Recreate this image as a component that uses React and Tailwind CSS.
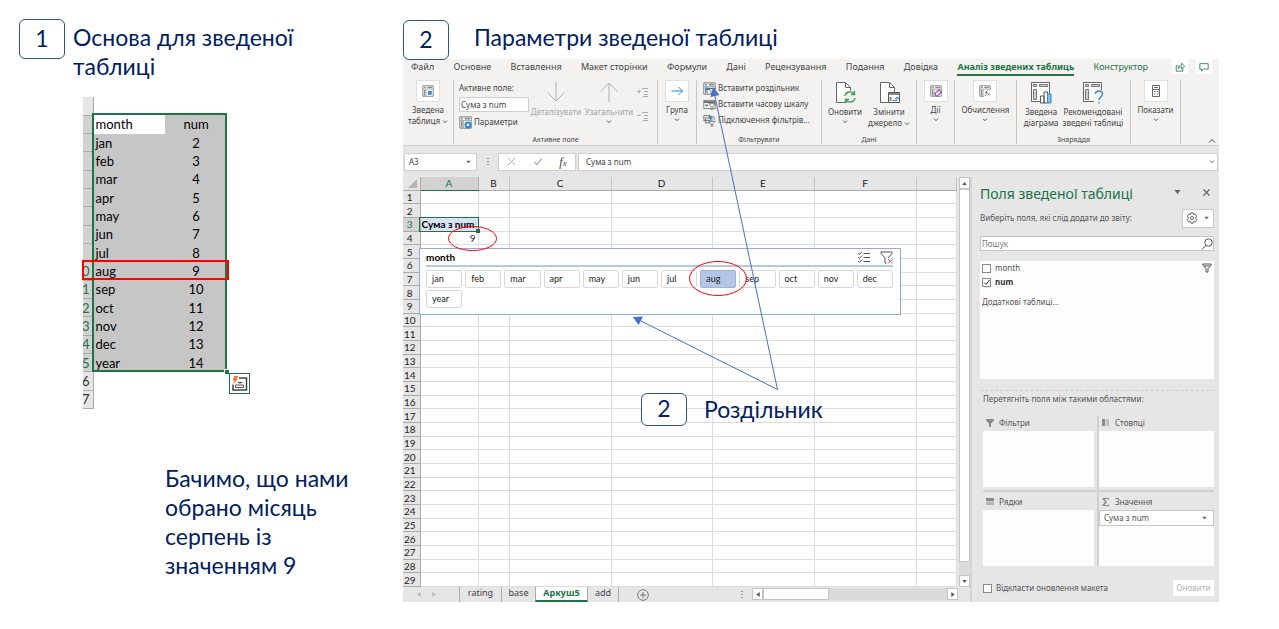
import React from "react";

const SLIDE = "font-['Lato',sans-serif] text-[#002060]";

const months = [
  ["jan", 2], ["feb", 3], ["mar", 4], ["apr", 5], ["may", 6], ["jun", 7], ["jul", 8],
  ["aug", 9], ["sep", 10], ["oct", 11], ["nov", 12], ["dec", 13], ["year", 14],
];

function Badge({ children, className = "h-10" }) {
  return (
    <span className={`flex w-[46px] shrink-0 items-center justify-center rounded-md border border-[#2f528f] bg-white pb-[2px] text-[23px] leading-none ${className}`}>
      {children}
    </span>
  );
}

function Chevron({ className = "" }) {
  return (
    <svg viewBox="0 0 8 6" className={`inline-block h-1 w-[6px] fill-none stroke-[#555] ${className}`} strokeWidth="1.5" aria-hidden="true">
      <path d="M1 1l3 3 3-3" />
    </svg>
  );
}

function Caret({ className = "" }) {
  return (
    <svg viewBox="0 0 8 5" className={`h-1 w-[7px] shrink-0 fill-[#666] ${className}`} aria-hidden="true">
      <path d="M0 0h8L4 5z" />
    </svg>
  );
}

/* ---------- source table ---------- */

function SourceTable() {
  return (
    <div className="relative ml-[83px] mt-4 w-[144px] font-['Lato',sans-serif] text-[13px] leading-[16px] text-black">
      <table className="h-[312px] w-full table-fixed border-collapse">
        <colgroup>
          <col className="w-[10px]" />
          <col className="w-[72px]" />
          <col />
        </colgroup>
        <tbody>
          <tr className="h-[17px]">
            <td className="border-b border-r border-[#ababab] bg-[#e6e6e6] p-0" />
            <td />
            <td />
          </tr>
          <tr className="h-[17px]">
            <RowTick active />
            <th scope="col" className="bg-white p-0 pl-[2px] text-left font-normal">month</th>
            <th scope="col" className="bg-[#c6c6c6] p-0 text-center font-normal">num</th>
          </tr>
          {months.map(([m, n], i) => (
            <tr key={m} className="h-[17px]">
              <RowTick n={i > 6 ? String((i + 3) % 10) : ""} active />
              <td className="bg-[#c6c6c6] p-0 pl-[2px]">{m}</td>
              <td className="bg-[#c6c6c6] p-0 text-center">{n}</td>
            </tr>
          ))}
          {["6", "7"].map((n) => (
            <tr key={n} className="h-[17px]">
              <RowTick n={n} />
              <td />
              <td />
            </tr>
          ))}
        </tbody>
      </table>
      <div className="pointer-events-none absolute left-[9px] right-0 top-[16px] h-[259px] border-2 border-[#217346]" />
      <div className="absolute right-[-2px] top-[272px] size-[5px] border-l border-t border-white bg-[#217346]" />
      <div className="pointer-events-none absolute left-[-1px] right-[-2px] top-[163px] h-5 border-2 border-[#f00]" />
      <button aria-label="Швидкий аналіз" className="absolute left-[146px] top-[276px] flex size-[21px] items-center justify-center border border-[#217346] bg-white">
        <svg viewBox="0 0 17 17" className="size-[17px] fill-none" aria-hidden="true">
          <path d="M8 3h7.500v12H2V9.500" stroke="#444" strokeWidth="1.500" />
          <path d="M4.500 12.500V10h8v2.500zM9 6.500V9M7 7.500h4.500" stroke="#555" />
          <path d="M3.500 1h4L5.500 4H7L2 9.500 3.500 5.500H1.500z" fill="#ed7d31" />
        </svg>
      </button>
    </div>
  );
}

function RowTick({ n, active }) {
  return (
    <th
      scope="row"
      className={`border-b border-r border-[#ababab] p-0 font-normal ${active ? "bg-[#d2d2d2] text-[#217346]" : "bg-[#e6e6e6] text-[#333]"}`}
    >
      {n && <span className="flex h-4 justify-end overflow-hidden pr-[3px]">{n}</span>}
    </th>
  );
}

/* ---------- ribbon ---------- */

function Group({ width, caption, children }) {
  return (
    <div className={`flex shrink-0 flex-col border-r border-[#c8c6c4] ${width}`}>
      <div className="flex flex-1 justify-center">{children}</div>
      <div className="h-[11px] text-center text-[7px] leading-[13px] text-[#444]">{caption}</div>
    </div>
  );
}

function BigButton({ icon, lines, boxed, chevron = "below", muted }) {
  return (
    <button className={`flex flex-col items-center whitespace-nowrap text-[8px] leading-[11px] ${muted ? "text-[#a6a6a6]" : "text-[#444]"}`}>
      <span className={boxed ? "mb-[2px] flex h-[22px] w-6 items-center justify-center border border-[#e1dfdd] bg-white" : "mb-[2px] flex h-6 items-center justify-center"}>
        {icon}
      </span>
      {lines.map((l, i) => (
        <span key={l}>
          {l}
          {chevron === "inline" && i === lines.length - 1 && <Chevron className="ml-[2px]" />}
        </span>
      ))}
      {chevron === "below" && <Chevron className="mt-[3px]" />}
    </button>
  );
}

function PivotIcon({ children, className = "size-[14px]" }) {
  return (
    <svg viewBox="0 0 16 16" className={`shrink-0 fill-none ${className}`} aria-hidden="true">
      <path d="M1 1h14v14H1z" fill="#fff" stroke="#666" />
      <path d="M2.500 3.300H5M7 3.300h6.500" stroke="#8a8a8a" strokeWidth="2" />
      <path d="M3.500 6.500v7.500" stroke="#8a8a8a" strokeWidth="2" />
      <path d="M1 5.500h14M5.500 5.500V15" stroke="#888" strokeWidth=".8" />
      {children}
    </svg>
  );
}

function LargePivot({ children }) {
  return (
    <svg viewBox="0 0 24 24" className="size-6 fill-none" aria-hidden="true">
      <path d="M2.500 2.500h18v19h-18z" fill="#fafafa" stroke="#666" />
      <path d="M4.500 4.500h3v2h-3zM10.500 4.500h8v2h-8zM4.500 9.500h3v10h-3z" fill="#d0d0d0" stroke="#777" />
      {children}
    </svg>
  );
}

function DocIcon({ children }) {
  return (
    <svg viewBox="0 0 24 24" className="size-6 fill-none" aria-hidden="true">
      <path d="M3.500 2.500h9l5 5v15h-14z" fill="#fff" stroke="#666" />
      <path d="M12.500 2.500v5h5" stroke="#666" />
      {children}
    </svg>
  );
}

function SmallButton({ icon, label }) {
  return (
    <button className="flex h-4 items-center gap-[2px] whitespace-nowrap text-[8px] leading-none text-[#444]">
      {icon}
      {label}
    </button>
  );
}

function BigArrow({ up }) {
  return (
    <svg viewBox="0 0 20 22" className={`h-[22px] w-5 fill-none stroke-[#b0b0b0] ${up ? "rotate-180" : ""}`} aria-hidden="true">
      <path d="M10 1v19M1.500 11.500L10 20l8.500-8.500" />
    </svg>
  );
}

function ExpandIcon({ minus }) {
  return (
    <svg viewBox="0 0 12 12" className="size-3 fill-none stroke-[#aaa]" aria-hidden="true">
      <path d={minus ? "M0 5.500h4" : "M0 5.500h4M2 3.500v4"} />
      <path d="M5 2.500h6M7 5.500h4M7 8.500h4M6 10.500h5" />
    </svg>
  );
}

function Ribbon() {
  const tabs = ["Файл", "Основне", "Вставлення", "Макет сторінки", "Формули", "Дані", "Рецензування", "Подання", "Довідка", "Аналіз зведених таблиць", "Конструктор"];
  return (
    <div className="border-b border-[#d0cecc] bg-[#f3f2f1]">
      <div className="flex h-[18px] pl-2 pr-[7px]">
        <nav className="flex flex-1 justify-between text-[9px] leading-[15px] text-[#444]">
          {tabs.map((t, i) => (
            <a
              key={t}
              href="#"
              className={`whitespace-nowrap ${i === 9 ? "h-[17px] border-b-2 border-[#217346] font-bold text-[#217346]" : i === 10 ? "text-[#217346]" : ""}`}
            >
              {t}
            </a>
          ))}
        </nav>
        <button aria-label="Поділитися" className="ml-6 flex h-[15px] w-4 items-center justify-center bg-white">
          <svg viewBox="0 0 12 12" className="size-[10px] fill-none stroke-[#217346]" aria-hidden="true">
            <path d="M4 4.500H1.500V11h8V8M4 8c0-3 2-4 4-4V1.500L11.500 5 8 8.500V6C6 6 5 6.500 4 8z" />
          </svg>
        </button>
        <button aria-label="Примітки" className="ml-2 flex h-[15px] w-4 items-center justify-center bg-white">
          <svg viewBox="0 0 12 12" className="size-[10px] fill-none stroke-[#217346]" aria-hidden="true">
            <path d="M1 2h10v6.500H5.500L3 11V8.500H1z" />
          </svg>
        </button>
      </div>

      <div className="flex h-[68px] pb-[1px] pt-[3px]">
        <Group width="w-[51px]">
          <BigButton boxed chevron="inline" lines={["Зведена", "таблиця"]} icon={<PivotIcon className="size-3"><path d="M8 8h5v5H8z" fill="#2b88d8" /></PivotIcon>} />
        </Group>
        <Group width="w-[204px]" caption="Активне поле">
          <div className="flex flex-1 pl-[5px]">
            <div className="flex w-[70px] flex-col text-[8px] text-[#444]">
              <label htmlFor="active-field" className="mb-1 mt-[2px] leading-[11px]">Активне поле:</label>
              <input id="active-field" defaultValue="Сума з num" className="mb-[2px] h-[15px] w-[70px] border border-[#d2d0ce] bg-white px-[1px] text-[8px] leading-none" />
              <SmallButton label="Параметри" icon={<PivotIcon className="size-[13px]"><circle cx="11" cy="11" r="3" stroke="#2b88d8" strokeWidth="2.500" fill="#fff" /></PivotIcon>} />
            </div>
            <div className="flex w-[54px] justify-center"><BigButton muted chevron="none" lines={["Деталізувати"]} icon={<BigArrow />} /></div>
            <div className="flex w-[52px] justify-center"><BigButton muted lines={["Узагальнити"]} icon={<BigArrow up />} /></div>
            <div className="flex flex-col gap-3 pl-[2px] pt-[6px]">
              <button aria-label="Розгорнути поле"><ExpandIcon /></button>
              <button aria-label="Згорнути поле"><ExpandIcon minus /></button>
            </div>
          </div>
        </Group>
        <Group width="w-[39px]">
          <BigButton
            boxed
            lines={["Група"]}
            icon={<svg viewBox="0 0 14 14" className="size-[14px] fill-none stroke-[#2b88d8]" aria-hidden="true"><path d="M1.500 7h11M8.500 3l4 4-4 4" /></svg>}
          />
        </Group>
        <Group width="w-[125px]" caption="Фільтрувати">
          <div className="flex flex-1 flex-col pl-[6px]">
            <SmallButton label="Вставити роздільник" icon={<PivotIcon className="size-[13px]"><path d="M3 7h10v3H3z" fill="#2b88d8" /><path d="M7 8h8l-3 3.500V15h-2v-3.500z" fill="#fff" stroke="#555" /></PivotIcon>} />
            <SmallButton
              label="Вставити часову шкалу"
              icon={<svg viewBox="0 0 16 16" className="size-[13px] fill-none stroke-[#666]" aria-hidden="true"><path d="M1 3h14v10H1z" fill="#fff" /><path d="M1 5h14M3 9h3" strokeWidth="2" /><path d="M7 7h8l-3 3.500V14h-2v-3.500z" fill="#fff" /></svg>}
            />
            <SmallButton
              label="Підключення фільтрів..."
              icon={<svg viewBox="0 0 16 16" className="size-[13px] fill-none stroke-[#666]" aria-hidden="true"><path d="M1 2h8v6H1zM3 5h8v6H3z" fill="#e5e5e5" /><path d="M7 9h8l-3 3v3h-2v-3z" fill="#fff" /><path d="M8 4c3-2 6-1 6 3M8 1v3.500h3" stroke="#2b88d8" strokeWidth="1.300" /></svg>}
            />
          </div>
        </Group>
        <Group width="w-[95px]" caption="Дані">
          <div className="flex flex-1 justify-around px-[3px]">
            <BigButton lines={["Оновити"]} icon={<DocIcon><circle cx="17" cy="17" r="6.500" fill="#f3f2f1" /><path d="M12 16a5 5 0 0 1 9-2M22 18a5 5 0 0 1-9 2M21.500 11v3.500H18M12.500 23v-3.500H16" stroke="#3a9b5c" strokeWidth="1.300" /></DocIcon>} />
            <BigButton chevron="inline" lines={["Змінити", "джерело"]} icon={<DocIcon><path d="M11.500 12.500h11v10h-11z" fill="#fff" stroke="#555" /><path d="M12 14h10" stroke="#888" strokeWidth="2" /><path d="M13.500 17v4" stroke="#888" strokeWidth="2" /><path d="M16 20.500h4v-3M18 19l2-2 2 2" stroke="#2b88d8" /></DocIcon>} />
          </div>
        </Group>
        <Group width="w-[38px]">
          <BigButton boxed lines={["Дії"]} icon={<PivotIcon className="size-3"><path d="M6.500 11.500l5-5 3.500 3-5 5H8z" fill="#fff" stroke="#a33fb5" strokeWidth="1.500" /></PivotIcon>} />
        </Group>
        <Group width="w-[62px]">
          <BigButton boxed lines={["Обчислення"]} icon={<PivotIcon className="size-3"><path d="M7 6.500h9V16H7z" fill="#fff" /><path d="M12 7.500c-2-.5-2 1-2.200 3s-.3 4-2 3.500M8 10h3.500M11.500 11l3 3M14.500 11l-3 3" stroke="#555" strokeWidth=".9" /></PivotIcon>} />
        </Group>
        <Group width="w-[114px]" caption="Знаряддя">
          <div className="flex flex-1 justify-center gap-1">
            <BigButton chevron="none" lines={["Зведена", "діаграма"]} icon={<LargePivot><path d="M11.500 16h3.500v7h-3.500zM15 12h3.500v11H15z" fill="#fff" stroke="#555" /><path d="M18.500 14H22v9h-3.500z" fill="#83beec" stroke="#2b88d8" /></LargePivot>} />
            <BigButton chevron="none" lines={["Рекомендовані", "зведені таблиці"]} icon={<LargePivot><path d="M13 10h10v13H13z" fill="#f3f2f1" /><path d="M14.500 14c0-4 7-4 7 0 0 3-3.500 3-3.500 6M18 22v1.500" stroke="#2b88d8" strokeWidth="1.300" /></LargePivot>} />
          </div>
        </Group>
        <Group width="w-[50px]">
          <BigButton
            boxed
            lines={["Показати"]}
            icon={<svg viewBox="0 0 14 14" className="size-[14px] fill-none stroke-[#666]" aria-hidden="true"><path d="M3.500 1.500h7v11h-7zM3.500 5.500h7M5 3.500h4" /><path d="M5 7.500h1.500M8 7.500h1.500M5 10h1.500M8 10h1.500" /></svg>}
          />
        </Group>
        <button aria-label="Згорнути стрічку" className="ml-auto mr-[3px] self-end">
          <svg viewBox="0 0 10 8" className="h-[6px] w-2 fill-none stroke-[#444]" strokeWidth="1.300" aria-hidden="true"><path d="M1 6l4-4 4 4" /></svg>
        </button>
      </div>
    </div>
  );
}

function FormulaBar() {
  return (
    <div className="flex h-[31px] items-center gap-[2px] bg-[#e6e6e6] pl-[1px] pr-[1px] text-[8px] text-[#444]">
      <div className="flex h-[18px] w-[73px] items-center justify-between border border-[#d0d0d0] bg-white px-1">
        <input aria-label="Ім’я" defaultValue="A3" className="w-10 leading-none" />
        <Caret className="scale-75" />
      </div>
      <span className="flex w-[17px] justify-center">
        <svg viewBox="0 0 2 10" className="h-[10px] w-[2px] fill-[#999]" aria-hidden="true"><path d="M0 1h2v1H0zM0 4h2v1H0zM0 7h2v1H0z" /></svg>
      </span>
      <div className="flex h-[18px] w-[78px] items-center justify-around border border-[#d0d0d0] bg-white">
        <button aria-label="Скасувати"><svg viewBox="0 0 10 10" className="size-[9px] fill-none stroke-[#aaa]" aria-hidden="true"><path d="M1 1l8 8M9 1L1 9" /></svg></button>
        <button aria-label="Ввести"><svg viewBox="0 0 11 10" className="h-[9px] w-[10px] fill-none stroke-[#aaa]" strokeWidth="1.300" aria-hidden="true"><path d="M1 5.500L4 8.500 10 1.500" /></svg></button>
        <button className="font-['Liberation_Serif',serif] text-[12px] italic leading-none">f<span className="text-[9px]">x</span></button>
      </div>
      <div className="flex h-[18px] flex-1 items-center border border-[#d0d0d0] bg-white pl-[7px] pr-[2px]">
        <input aria-label="Рядок формул" defaultValue="Сума з num" className="flex-1 leading-none" />
        <Chevron />
      </div>
    </div>
  );
}

/* ---------- worksheet ---------- */

const columns = ["A", "B", "C", "D", "E", "F", ""];

function Sheet() {
  return (
    <table className="h-[410px] min-w-0 flex-1 table-fixed border-collapse bg-white font-['Lato',sans-serif] text-[10px] leading-[10px] text-[#222]">
      <colgroup>
        <col className="w-[17px]" />
        <col className="w-[58px]" />
        <col className="w-[31px]" />
        <col className="w-[102px]" />
        <col className="w-[101px]" />
        <col className="w-[102px]" />
        <col className="w-[102px]" />
        <col />
      </colgroup>
      <thead>
        <tr className="h-[13px] bg-[#e6e6e6]">
          <td className="border-b border-r border-[#ababab] p-0">
            <svg viewBox="0 0 10 10" className="ml-[5px] size-[9px] fill-[#b4b4b4]" aria-hidden="true"><path d="M10 0v10H0z" /></svg>
          </td>
          {columns.map((c) => (
            <th
              key={c}
              scope="col"
              className={`border-r p-0 font-normal ${c === "A" ? "border-b border-r-[#ababab] border-b-[#217346] bg-[#d2d2d2] text-[#217346]" : "border-b border-b-[#ababab] border-r-[#c4c4c4]"}`}
            >
              {c}
            </th>
          ))}
        </tr>
      </thead>
      <tbody>
        {Array.from({ length: 29 }, (_, i) => i + 1).map((n) => (
          <tr key={n} className="h-[13px]">
            <th
              scope="row"
              className={`border-b border-r border-[#ababab] p-0 pr-[3px] text-center font-normal ${n === 3 ? "bg-[#d2d2d2] text-[#217346]" : "bg-[#e6e6e6]"}`}
            >
              {n}
            </th>
            {columns.map((c) => (
              <td
                key={c}
                className={`whitespace-nowrap border-b border-r border-[#dcdcdc] p-0 ${n === 3 && c === "A" ? "bg-[#d9e1f2] pl-[1px] font-bold text-black" : ""} ${n === 4 && c === "A" ? "pr-[2px] text-right" : ""}`}
              >
                {c === "A" && n === 3 ? "Сума з num" : c === "A" && n === 4 ? "9" : null}
              </td>
            ))}
          </tr>
        ))}
      </tbody>
    </table>
  );
}

function Slicer() {
  return (
    <div className="absolute left-4 top-[71px] h-[67px] w-[482px] border border-[#8faadc] bg-white pl-[6px] pr-[7px] font-['Lato',sans-serif] text-[9px]">
      <div className="flex h-[18px] items-center justify-between border-b-2 border-[#b4c7e7]">
        <span className="text-[10px] font-bold leading-none text-black">month</span>
        <span className="flex gap-[10px]">
          <button aria-label="Вибір кількох елементів">
            <svg viewBox="0 0 13 13" className="size-[13px] fill-none stroke-[#555]" aria-hidden="true"><path d="M6.500 2.500H13M6.500 6.500H13M6.500 10.500H13M1 2l1.500 1.500L5 .5M1 6l1.500 1.500L5 4.500M1 10l1.500 1.500L5 8.500" /></svg>
          </button>
          <button aria-label="Очистити фільтр">
            <svg viewBox="0 0 13 13" className="size-[13px] fill-none stroke-[#555]" aria-hidden="true"><path d="M1 1h11v1.500L8 7M1 1v1.500L5 7v5h1.500" /><path d="M8 8l4.500 4.500M12.500 8L8 12.500" stroke="#e8605a" /></svg>
          </button>
        </span>
      </div>
      <div className="mt-[3px] grid grid-cols-12 gap-x-[3px] gap-y-[2px]">
        {months.map(([m]) => (
          <button
            key={m}
            className={`h-[18px] rounded-xs border pb-[1px] pl-[5px] text-left leading-none text-[#222] ${m === "aug" ? "border-[#9fb2d8] bg-[#b4c6e7]" : "border-[#d9d9d9] bg-white"}`}
          >
            {m}
          </button>
        ))}
      </div>
    </div>
  );
}

function SheetTabs() {
  return (
    <div className="flex h-[15px] items-stretch bg-[#e6e6e6] text-[9px] leading-[11px] text-[#444]">
      <span className="flex w-[57px] items-center gap-[11px] border-r border-[#ababab] pl-[14px]">
        <svg viewBox="0 0 4 6" className="h-[5px] w-[4px] fill-[#b8b8b8]" aria-hidden="true"><path d="M4 0v6L0 3z" /></svg>
        <svg viewBox="0 0 4 6" className="h-[5px] w-[4px] fill-[#b8b8b8]" aria-hidden="true"><path d="M0 0v6l4-3z" /></svg>
      </span>
      <button className="w-[42px] border-r border-[#ababab] pb-1">rating</button>
      <button className="w-[33px] pb-1">base</button>
      <button className="w-[53px] border-x border-b-2 border-x-[#ababab] border-b-[#217346] bg-white pb-[2px] font-bold text-[#217346]">Аркуш5</button>
      <button className="w-[31px] border-r border-[#ababab] pb-1">add</button>
      <button aria-label="Новий аркуш" className="ml-[18px]">
        <svg viewBox="0 0 12 12" className="size-3 fill-none stroke-[#777]" aria-hidden="true"><circle cx="6" cy="6" r="5.300" /><path d="M6 3v6M3 6h6" /></svg>
      </button>
      <svg viewBox="0 0 2 10" className="ml-auto mr-[9px] mt-[3px] h-[10px] w-[2px] fill-[#999]" aria-hidden="true"><path d="M0 1h2v1H0zM0 4h2v1H0zM0 7h2v1H0z" /></svg>
      <div className="mr-3 mt-[1px] flex h-3 w-[206px] justify-between bg-[#dadada]">
        <button aria-label="Прокрутити ліворуч" className="flex w-[11px] items-center justify-center border border-[#c4c4c4] bg-white"><svg viewBox="0 0 4 6" className="h-[5px] w-[4px] fill-[#555]" aria-hidden="true"><path d="M4 0v6L0 3z" /></svg></button>
        <span className="mr-auto w-[66px] border border-[#c4c4c4] bg-white" />
        <button aria-label="Прокрутити праворуч" className="flex w-[11px] items-center justify-center border border-[#c4c4c4] bg-white"><svg viewBox="0 0 4 6" className="h-[5px] w-[4px] fill-[#555]" aria-hidden="true"><path d="M0 0v6l4-3z" /></svg></button>
      </div>
    </div>
  );
}

function VerticalScroll() {
  return (
    <div className="ml-[2px] flex w-[11px] shrink-0 flex-col bg-[#dadada]">
      <button aria-label="Прокрутити вгору" className="flex h-3 items-center justify-center border border-[#c4c4c4] bg-white"><svg viewBox="0 0 6 4" className="h-[3px] w-[5px] fill-[#555]" aria-hidden="true"><path d="M0 4h6L3 0z" /></svg></button>
      <span className="h-[373px] border border-[#c4c4c4] bg-white" />
      <button aria-label="Прокрутити вниз" className="mt-auto flex h-3 items-center justify-center border border-[#c4c4c4] bg-white"><svg viewBox="0 0 6 4" className="h-[3px] w-[5px] fill-[#555]" aria-hidden="true"><path d="M0 0h6L3 4z" /></svg></button>
    </div>
  );
}

/* ---------- field pane ---------- */

function Check({ label, bold, checked }) {
  return (
    <label className={`flex items-center gap-1 leading-[14px] ${bold ? "font-bold text-[#333]" : ""}`}>
      <span className="grid">
        <input type="checkbox" defaultChecked={checked} className="peer col-start-1 row-start-1 size-[9px] appearance-none border border-[#8a8a8a] bg-white" />
        <svg viewBox="0 0 9 9" className="invisible col-start-1 row-start-1 size-[9px] fill-none stroke-[#333] peer-checked:visible" aria-hidden="true"><path d="M2 4.500l2 2 3.500-4.500" /></svg>
      </span>
      {label}
    </label>
  );
}

function Area({ icon, label, className, children }) {
  return (
    <div className={`flex flex-col ${className}`}>
      <div className="flex h-[15px] items-center gap-[5px] pb-[1px] pl-[3px]">
        <svg viewBox="0 0 8 8" className="size-2 fill-[#8a8a8a]" aria-hidden="true">{icon}</svg>
        {label}
      </div>
      <div className="h-14 bg-[#fdfdfd]">{children}</div>
    </div>
  );
}

function FieldPane() {
  return (
    <aside className="flex w-[249px] shrink-0 flex-col border-l-2 border-[#d4d4d4] bg-[#e6e6e6] pl-2 pr-[5px] text-[8px] text-[#555]">
      <div className="mt-[7px] flex h-5 items-center text-[#666]">
        <h2 className="flex-1 whitespace-nowrap text-[14px] leading-5 text-[#217346]">Поля зведеної таблиці</h2>
        <button aria-label="Параметри області" className="mb-1 mr-[22px]"><Caret /></button>
        <button aria-label="Закрити" className="mb-1 mr-1"><svg viewBox="0 0 8 8" className="size-[7px] fill-none stroke-[#555]" strokeWidth="1.300" aria-hidden="true"><path d="M.5.5l7 7M7.500.5l-7 7" /></svg></button>
      </div>
      <div className="mt-1 flex h-5 items-center justify-between">
        <span>Виберіть поля, які слід додати до звіту:</span>
        <button aria-label="Знаряддя" className="flex h-[19px] w-8 items-center justify-center gap-[5px] border border-[#c8c8c8] bg-white">
          <svg viewBox="0 0 12 12" className="size-3 fill-none stroke-[#666]" aria-hidden="true"><path d="M4.500 2.500L5 .7h2l.5 1.800 1.800-.4 1.500 2L9.500 6l1.300 1.900-1.500 2-1.800-.4-.5 1.800H5l-.5-1.800-1.800.4-1.500-2L2.500 6 1.200 4.100l1.500-2z" /><circle cx="6" cy="6" r="1.500" /></svg>
          <Caret className="scale-75" />
        </button>
      </div>
      <div className="mt-2 flex h-[15px] items-center border border-[#c4c4c4] bg-white">
        <input aria-label="Пошук" placeholder="Пошук" className="min-w-0 flex-1 pl-[1px] leading-none placeholder:text-[#777]" />
        <svg viewBox="0 0 12 12" className="size-3 fill-none stroke-[#555]" aria-hidden="true"><circle cx="7.500" cy="4.500" r="3.700" /><path d="M5 7.500L.8 11.500" /></svg>
      </div>
      <div className="mt-[10px] h-[118px] bg-[#fdfdfd] pl-[2px]">
        <div className="flex items-center justify-between pr-[2px]">
          <Check label="month" />
          <svg viewBox="0 0 10 10" className="size-[10px] fill-none stroke-[#555]" aria-hidden="true"><path d="M.8 1h8.400v1L6 5.500V9H4V5.500L.8 2zM2 3h6" /></svg>
        </div>
        <Check label="num" bold checked />
        <a href="#" className="mt-[7px] block leading-[12px]">Додаткові таблиці...</a>
      </div>
      <div className="mt-[11px] border-t border-dashed border-[#cfcfcf] pl-[3px] pt-[2px] leading-[12px]">Перетягніть поля між такими областями:</div>
      <div className="ml-[3px] mt-[11px] flex border-b-2 border-[#d0d0d0] pb-[3px]">
        <Area className="mr-[3px] w-[48%]" label="Фільтри" icon={<path d="M0 0h8v1.500L5 4.500V8H3V4.500L0 1.500z" />} />
        <div className="mb-[-3px] w-[2px] bg-[#d0d0d0]" />
        <Area className="flex-1" label="Стовпці" icon={<><path d="M0 0h3v7H0z" /><path d="M3.500 0H7v7H3.500z" fill="#c0c0c0" /></>} />
      </div>
      <div className="ml-[3px] mt-[3px] flex">
        <Area className="mr-[3px] w-[48%]" label="Рядки" icon={<><path d="M0 0h8v3H0z" /><path d="M0 3.500h8V7H0z" fill="#b4b4b4" /></>} />
        <div className="mt-[-3px] w-[2px] bg-[#d0d0d0]" />
        <Area className="flex-1" label="Значення" icon={<path d="M.5 0h6.500v2L6 1H2.500l2.500 3-2.500 3H6l1-1v2H.5V7L3 4 .5 1z" />}>
          <div className="flex items-center border border-[#c8c8c8] bg-white">
            <select aria-label="Значення" className="h-[14px] min-w-0 flex-1 appearance-none pl-1 leading-[14px]">
              <option>Сума з num</option>
            </select>
            <Caret className="mr-[5px] scale-75" />
          </div>
        </Area>
      </div>
      <div className="ml-[3px] mt-[14px] flex items-center justify-between">
        <Check label="Відкласти оновлення макета" />
        <button disabled className="h-4 w-[41px] bg-white leading-none text-[#b0b0b0]">Оновити</button>
      </div>
    </aside>
  );
}

/* ---------- annotations ---------- */

function Annotations() {
  return (
    <svg className="pointer-events-none absolute left-0 top-0 h-full w-full fill-none" aria-hidden="true">
      <g stroke="#4472c4">
        <path d="M374.500 389.500L311 92M374.500 389.500L236 320" />
        <path d="M310 87l-2.500 10 9-2zM230 317l10-.5-4.500 8.500z" fill="#4472c4" stroke="none" />
      </g>
      <g stroke="#f00">
        <ellipse cx="69.500" cy="238.500" rx="24" ry="12" />
        <ellipse cx="315" cy="278.500" rx="28.500" ry="17" />
      </g>
    </svg>
  );
}

export default function App() {
  return (
    <main className="flex min-h-screen bg-white">
      <section className="w-[403px] shrink-0">
        <div className={`flex gap-2 pl-[19px] pt-[19px] ${SLIDE}`}>
          <Badge>1</Badge>
          <h1 className="w-[250px] pt-1 text-[23px] leading-[29px]">Основа для зведеної таблиці</h1>
        </div>
        <SourceTable />
        <p className={`ml-[165px] mt-[55px] w-[200px] text-[23px] leading-[29px] ${SLIDE}`}>
          Бачимо, що нами обрано місяць серпень із значенням 9
        </p>
      </section>

      <section className="relative mr-[60px] h-fit min-w-0 flex-1">
        <div className={`flex h-[59px] items-start gap-[25px] pt-5 ${SLIDE}`}>
          <Badge>2</Badge>
          <h1 className="pt-[3px] text-[23px] leading-[29px]">Параметри зведеної таблиці</h1>
        </div>
        <div className="bg-[#e6e6e6] font-['Noto_Sans',sans-serif]">
          <Ribbon />
          <FormulaBar />
          <div className="flex">
            <div className="relative min-w-0 flex-1">
              <div className="flex">
                <Sheet />
                <VerticalScroll />
              </div>
              <SheetTabs />
              <Slicer />
              <div className="pointer-events-none absolute left-4 top-10 h-[15px] w-[60px] border border-[#217346]" />
              <div className="absolute left-[73px] top-[52px] size-1 bg-[#217346]" />
              <div className={`absolute left-[238px] top-[216px] flex items-center gap-[17px] ${SLIDE}`}>
                <Badge className="h-[33px]">2</Badge>
                <span className="text-[23px] leading-[29px]">Роздільник</span>
              </div>
            </div>
            <FieldPane />
          </div>
        </div>
        <Annotations />
      </section>
    </main>
  );
}
